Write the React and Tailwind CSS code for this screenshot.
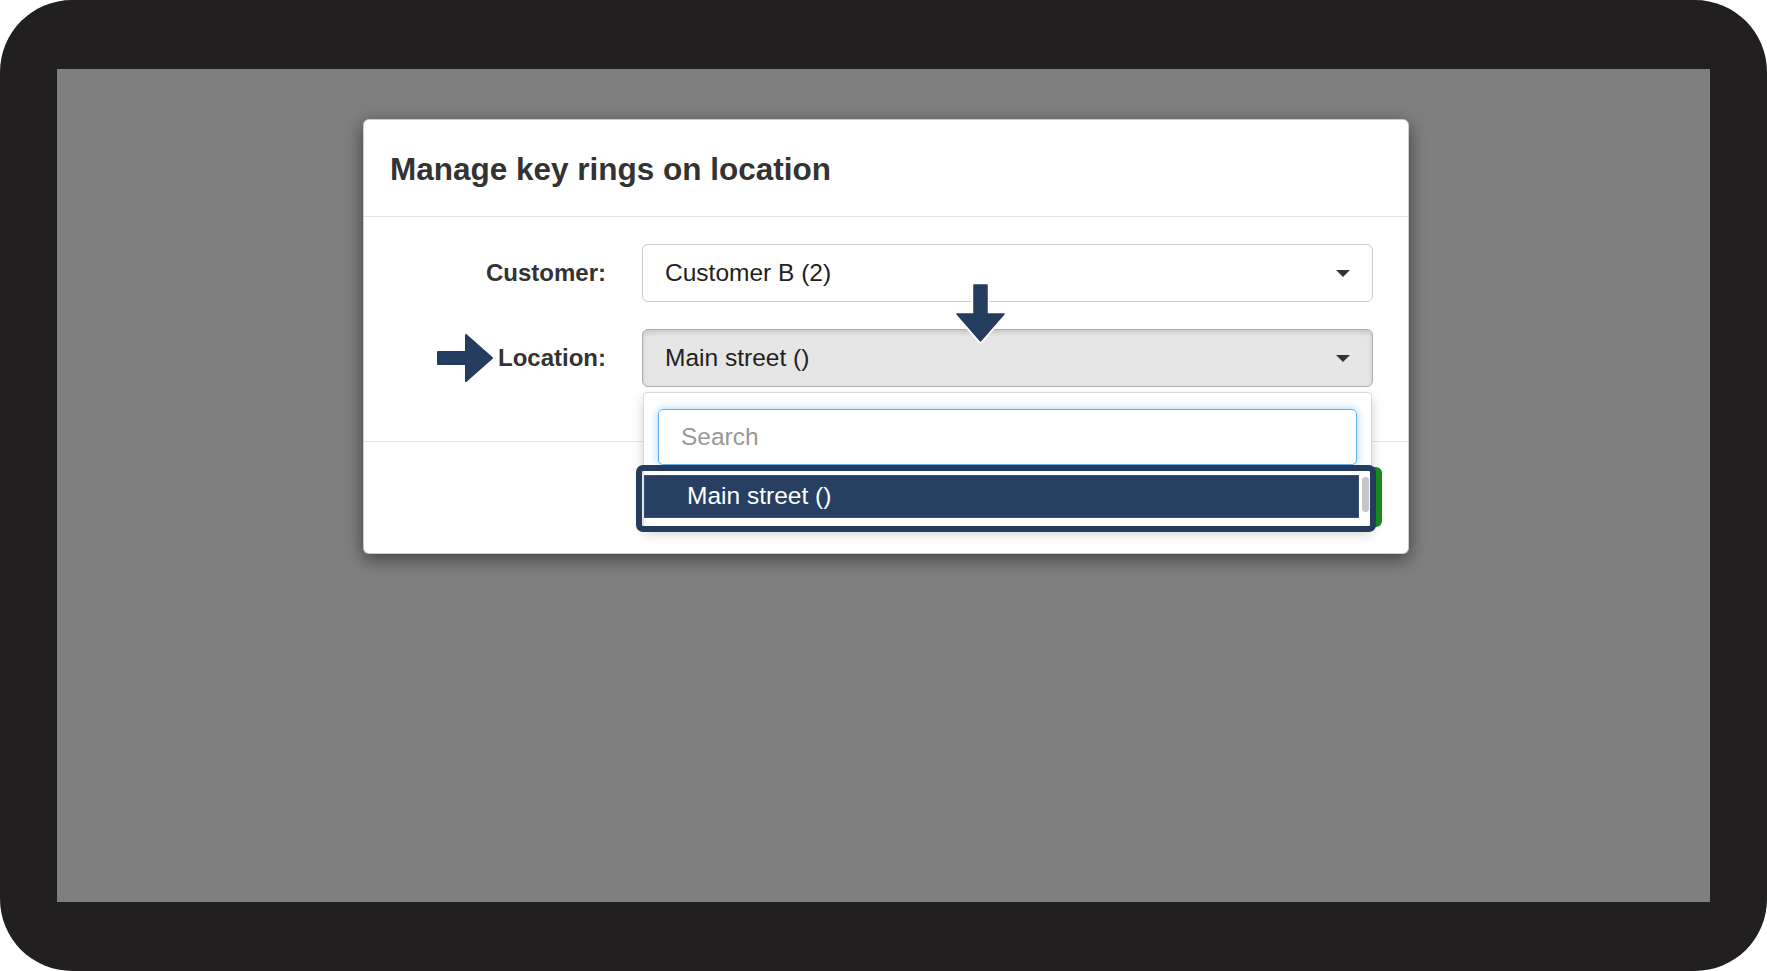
const NAVY = "#243c5e";

function Caret() {
  return (
    <span className="w-0 h-0 border-l-[7px] border-r-[7px] border-t-[7px] border-l-transparent border-r-transparent border-t-[#333]" />
  );
}

function RightArrow() {
  return (
    <svg width="57" height="50" viewBox="0 0 57 50" className="shrink-0">
      <path
        d="M1 19 H29 V2 L55 25 L29 48 V31 H1 Z"
        fill={NAVY}
        stroke={NAVY}
        strokeWidth="2"
        strokeLinejoin="round"
      />
    </svg>
  );
}

function DownArrow() {
  return (
    <svg width="52" height="60" viewBox="0 0 52 60" className="absolute left-[313px] top-[-46px] z-20">
      {/* white halo around the head */}
      <path
        d="M19 2 H32 V31 H49 L25.5 58 L2 31 H19 Z"
        fill="white"
        stroke="white"
        strokeWidth="5"
        strokeLinejoin="round"
      />
      <path
        d="M19 2 H32 V31 H49 L25.5 58 L2 31 H19 Z"
        fill={NAVY}
        stroke={NAVY}
        strokeWidth="1.5"
        strokeLinejoin="round"
      />
    </svg>
  );
}

function LocationDropdown() {
  return (
    <div className="absolute left-[1px] right-[1px] top-[calc(100%+5px)] z-10">
      <div className="relative bg-white border border-[#d9d9d9] rounded-[4px] shadow-[0_6px_12px_rgba(0,0,0,0.18)] pt-[16px] pb-[9px]">
        <div className="mx-[14px] h-[56px] flex items-center px-[22px] border border-[#66afe9] rounded-[5px] shadow-[0_0_8px_rgba(102,175,233,0.6)] text-[24.5px] text-[#999]">
          Search
        </div>
        <div className="mt-[10px] flex">
          <div className="flex-1 h-[43px] flex items-center pl-[42px] bg-[#274062] border border-[#3a5375] text-white text-[24.5px]">
            Main street ()
          </div>
          <div className="w-[12px] flex justify-center">
            <div className="mt-[2px] w-[7px] h-[35px] rounded-full bg-[#c6c6c6]" />
          </div>
        </div>

        {/* green edge peeking out behind the highlight */}
        <div className="absolute left-[727px] top-[74px] w-[11px] h-[60px] rounded-r-[6px] bg-[#17891a]" />
        {/* highlight frame */}
        <div className="absolute left-[-8px] right-[-5px] top-[72px] h-[67px] border-[6px] border-[#243c5e] rounded-[7px]" />
      </div>
    </div>
  );
}

export default function App() {
  return (
    <div className="h-[971px] w-full bg-white font-['Liberation_Sans',Arial,sans-serif] text-[#333] overflow-hidden">
      <div className="h-full rounded-[72px] bg-[#211f20] px-[57px] py-[69px] flex">
        <div className="flex-1 bg-[#7f7f7f] pl-[306px] pt-[50px]">
          <div className="w-[1046px] bg-white border border-[rgba(0,0,0,0.2)] rounded-[6px] shadow-[0_5px_18px_rgba(0,0,0,0.5)]">
            {/* header */}
            <div className="pl-[26px] pt-[32px] pb-[30px] border-b border-[#e5e5e5]">
              <h1 className="text-[31.5px] leading-[34px] font-bold text-[#333]">Manage key rings on location</h1>
            </div>

            {/* body */}
            <div className="pl-[36px] pr-[35px] pt-[27px] pb-[54px] grid grid-cols-[206px_1fr] gap-x-[36px] gap-y-[27px] items-center">
              <label className="text-right text-[24px] font-bold">Customer:</label>
              <div className="h-[58px] flex items-center justify-between pl-[22px] pr-[22px] border border-[#ccc] rounded-[6px] bg-white text-[24.5px] text-[#222]">
                <span>Customer B (2)</span>
                <Caret />
              </div>

              <div className="flex items-center justify-end gap-[4px]">
                <RightArrow />
                <label className="text-[24px] font-bold">Location:</label>
              </div>
              <div className="relative">
                <div className="h-[58px] flex items-center justify-between pl-[22px] pr-[22px] border border-[#adadad] rounded-[6px] bg-[#e6e6e6] shadow-[inset_0_3px_5px_rgba(0,0,0,0.125)] text-[24.5px] text-[#222]">
                  <span>Main street ()</span>
                  <Caret />
                </div>
                <DownArrow />
                <LocationDropdown />
              </div>
            </div>

            {/* footer */}
            <div className="h-[112px] border-t border-[#e5e5e5]" />
          </div>
        </div>
      </div>
    </div>
  );
}
